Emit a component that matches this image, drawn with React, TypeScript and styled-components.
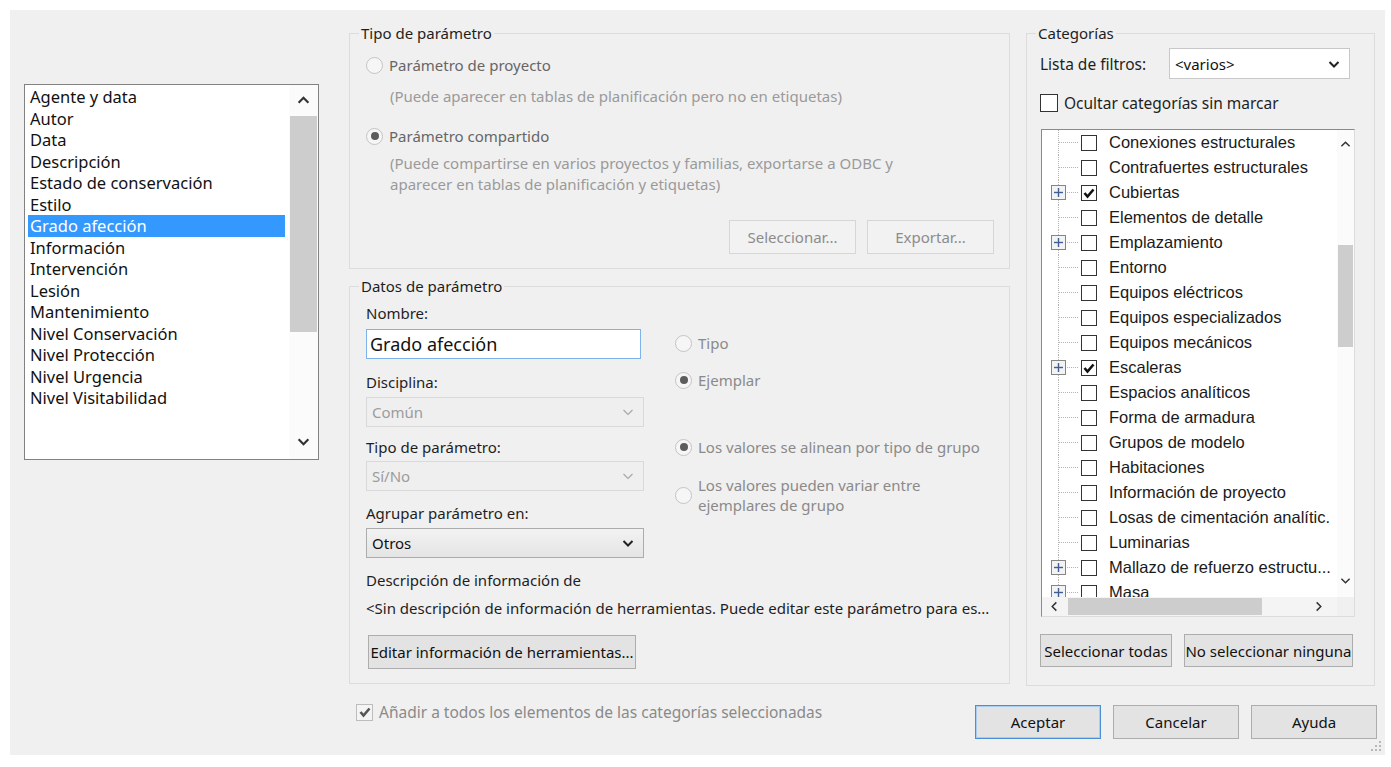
import styled, { createGlobalStyle } from "styled-components";

const GlobalStyle = createGlobalStyle`
  html, body {
    margin: 0;
    padding: 0;
    background: #ffffff;
  }
  body {
    font-family: "Noto Sans", "Open Sans", sans-serif;
  }
  * {
    box-sizing: border-box;
  }
`;

const uiFont = `"Noto Sans", "Open Sans", sans-serif`;
const treeFont = `"Liberation Sans", Arial, sans-serif`;

const params = [
  "Agente y data",
  "Autor",
  "Data",
  "Descripción",
  "Estado de conservación",
  "Estilo",
  "Grado afección",
  "Información",
  "Intervención",
  "Lesión",
  "Mantenimiento",
  "Nivel Conservación",
  "Nivel Protección",
  "Nivel Urgencia",
  "Nivel Visitabilidad",
];

type Cat = { name: string; plus?: boolean; checked?: boolean };

const categories: Cat[] = [
  { name: "Conexiones estructurales" },
  { name: "Contrafuertes estructurales" },
  { name: "Cubiertas", plus: true, checked: true },
  { name: "Elementos de detalle" },
  { name: "Emplazamiento", plus: true },
  { name: "Entorno" },
  { name: "Equipos eléctricos" },
  { name: "Equipos especializados" },
  { name: "Equipos mecánicos" },
  { name: "Escaleras", plus: true, checked: true },
  { name: "Espacios analíticos" },
  { name: "Forma de armadura" },
  { name: "Grupos de modelo" },
  { name: "Habitaciones" },
  { name: "Información de proyecto" },
  { name: "Losas de cimentación analític." },
  { name: "Luminarias" },
  { name: "Mallazo de refuerzo estructu...", plus: true },
  { name: "Masa", plus: true },
];

const Dialog = styled.div`
  position: relative;
  margin: 10px 0 0 10px;
  width: 1375px;
  height: 745px;
  background: #f0f0f0;
  padding: 13px 8px 0 14px;
  display: flex;
  flex-direction: column;
  color: #1e1e1e;
  font-family: ${uiFont};
`;

const Main = styled.div`
  display: flex;
  align-items: flex-start;
`;

/* ---------- left list ---------- */

const ListBox = styled.div`
  margin-top: 61px;
  width: 295px;
  height: 376px;
  border: 1px solid #828282;
  background: #ffffff;
  display: flex;
`;

const ListItems = styled.div`
  flex: 1;
  padding: 1px 4px 0 3px;
`;

const ListItem = styled.div<{ $selected?: boolean }>`
  font-size: 16.5px;
  line-height: 21.5px;
  padding-left: 2px;
  white-space: nowrap;
  color: ${({ $selected }) => ($selected ? "#ffffff" : "#111111")};
  background: ${({ $selected }) => ($selected ? "#3399ff" : "transparent")};
`;

const VScroll = styled.div<{ $w: number }>`
  width: ${({ $w }) => $w}px;
  display: flex;
  flex-direction: column;
  align-items: stretch;
  background: #fbfbfb;
`;

const ArrowCell = styled.div<{ $h: number }>`
  height: ${({ $h }) => $h}px;
  flex-shrink: 0;
  display: flex;
  align-items: center;
  justify-content: center;
`;

const Thumb = styled.div<{ $h: number; $top?: number }>`
  height: ${({ $h }) => $h}px;
  margin: ${({ $top }) => $top ?? 0}px 1px 0 1px;
  background: #cdcdcd;
  flex-shrink: 0;
`;

const Spacer = styled.div`
  flex: 1;
`;

/* ---------- groups ---------- */

const Column = styled.div<{ $w: number; $ml: number }>`
  width: ${({ $w }) => $w}px;
  margin-left: ${({ $ml }) => $ml}px;
  display: flex;
  flex-direction: column;
  gap: 7px;
`;

const Group = styled.fieldset`
  margin: 0;
  padding: 0;
  min-width: 0;
  width: 100%;
  border: 1px solid #dcdcdc;
`;

const Legend = styled.legend`
  margin-left: 9px;
  padding: 0 2px;
  font-size: 15px;
  line-height: 20px;
  color: #1e1e1e;
`;

const Body = styled.div<{ $pad: string }>`
  padding: ${({ $pad }) => $pad};
  display: flex;
  flex-direction: column;
`;

const RadioRow = styled.div<{ $mt?: number }>`
  display: flex;
  align-items: center;
  gap: 6px;
  min-height: 22px;
  margin-top: ${({ $mt }) => $mt ?? 0}px;
`;

const RadioCircle = styled.span<{ $checked?: boolean }>`
  width: 17px;
  height: 17px;
  flex-shrink: 0;
  border-radius: 50%;
  border: 1px solid #c4c4c4;
  background: #f6f6f6;
  display: flex;
  align-items: center;
  justify-content: center;
  &::after {
    content: "";
    display: ${({ $checked }) => ($checked ? "block" : "none")};
    width: 8px;
    height: 8px;
    border-radius: 50%;
    background: #5c5c5c;
  }
`;

const OptionText = styled.span<{ $tone?: "mid" | "light" }>`
  font-size: 15px;
  line-height: 20px;
  color: ${({ $tone }) => ($tone === "light" ? "#8a8a8a" : "#666666")};
`;

const Hint = styled.div<{ $mt: number }>`
  margin: ${({ $mt }) => $mt}px 0 0 24px;
  font-size: 15px;
  line-height: 21px;
  color: #9a9a9a;
`;

const ButtonRow = styled.div<{ $mt: number; $justify?: string; $gap: number; $ml?: number }>`
  display: flex;
  justify-content: ${({ $justify }) => $justify ?? "flex-start"};
  gap: ${({ $gap }) => $gap}px;
  margin-top: ${({ $mt }) => $mt}px;
  margin-left: ${({ $ml }) => $ml ?? 0}px;
`;

const Button = styled.button<{
  $w: number;
  $h?: number;
  $disabled?: boolean;
  $default?: boolean;
}>`
  width: ${({ $w }) => $w}px;
  height: ${({ $h }) => $h ?? 34}px;
  padding: 0;
  font-family: ${uiFont};
  font-size: 15px;
  color: ${({ $disabled }) => ($disabled ? "#8c8c8c" : "#111111")};
  background: ${({ $disabled }) => ($disabled ? "#f2f2f2" : "#e3e3e3")};
  border: 1px solid
    ${({ $disabled, $default }) =>
      $default ? "#4a90d9" : $disabled ? "#d6d6d6" : "#adadad"};
  box-shadow: ${({ $default }) =>
    $default ? "inset 0 0 0 1px #a9cdf0" : "none"};
  white-space: nowrap;
  overflow: hidden;
`;

const FieldsArea = styled.div`
  display: flex;
  align-items: flex-start;
`;

const FieldsCol = styled.div`
  width: 278px;
  display: flex;
  flex-direction: column;
`;

const RadiosCol = styled.div`
  margin-left: 31px;
  display: flex;
  flex-direction: column;
`;

const Label = styled.div<{ $mt?: number }>`
  margin-top: ${({ $mt }) => $mt ?? 0}px;
  font-size: 15px;
  line-height: 20px;
  color: #1e1e1e;
  white-space: nowrap;
`;

const NameInput = styled.div`
  margin-top: 6px;
  width: 275px;
  height: 30px;
  border: 1px solid #7eb4ea;
  background: #ffffff;
  padding-left: 3px;
  font-size: 18px;
  line-height: 28px;
  color: #111111;
`;

const Combo = styled.div<{
  $variant: "disabled" | "enabled" | "white";
  $mt?: number;
  $w: number;
  $h?: number;
}>`
  margin-top: ${({ $mt }) => $mt ?? 0}px;
  width: ${({ $w }) => $w}px;
  height: ${({ $h }) => $h ?? 30}px;
  display: flex;
  align-items: center;
  justify-content: space-between;
  padding: 0 9px 0 5px;
  font-size: 15px;
  color: ${({ $variant }) => ($variant === "disabled" ? "#9c9c9c" : "#111111")};
  border: 1px solid
    ${({ $variant }) =>
      $variant === "disabled" ? "#d9d9d9" : $variant === "white" ? "#c8c8c8" : "#acacac"};
  background: ${({ $variant }) =>
    $variant === "disabled"
      ? "#efefef"
      : $variant === "white"
      ? "#ffffff"
      : "linear-gradient(#f2f2f2, #e4e4e4)"};
`;

const DescLine = styled.div`
  margin-top: 8px;
  font-size: 15px;
  line-height: 20px;
  color: #1e1e1e;
  white-space: nowrap;
  overflow: hidden;
`;

/* ---------- categories ---------- */

const FilterRow = styled.div`
  display: flex;
  align-items: center;
`;

const FilterLabel = styled.span`
  width: 129px;
  font-size: 15.5px;
  color: #1e1e1e;
`;

const CheckRow = styled.div<{ $mt?: number; $ml?: number }>`
  display: flex;
  align-items: center;
  gap: 6px;
  margin-top: ${({ $mt }) => $mt ?? 0}px;
  margin-left: ${({ $ml }) => $ml ?? 0}px;
`;

const Box = styled.span<{ $size: number; $muted?: boolean; $ml?: number }>`
  width: ${({ $size }) => $size}px;
  height: ${({ $size }) => $size}px;
  margin-left: ${({ $ml }) => $ml ?? 0}px;
  flex-shrink: 0;
  border: 1px solid ${({ $muted }) => ($muted ? "#bdbdbd" : "#333333")};
  background: ${({ $muted }) => ($muted ? "#f4f4f4" : "#ffffff")};
  display: flex;
  align-items: center;
  justify-content: center;
`;

const CheckText = styled.span<{ $muted?: boolean }>`
  font-size: 15.5px;
  line-height: 20px;
  color: ${({ $muted }) => ($muted ? "#8a8a8a" : "#1e1e1e")};
  white-space: nowrap;
`;

const TreeBox = styled.div`
  margin: 16px 0 0 1px;
  width: 314px;
  height: 488px;
  border-top: 1px solid #8a8a8a;
  border-left: 1px solid #8a8a8a;
  border-right: 1px solid #dcdcdc;
  border-bottom: 1px solid #dcdcdc;
  background: #ffffff;
  display: flex;
  flex-direction: column;
`;

const TreeMain = styled.div`
  height: 467px;
  display: flex;
`;

const TreeViewport = styled.div`
  flex: 1;
  overflow: hidden;
`;

const TreeRow = styled.div`
  height: 25px;
  display: flex;
  align-items: center;
  white-space: nowrap;
`;

const TreeText = styled.span`
  margin-left: 12px;
  font-family: ${treeFont};
  font-size: 16.5px;
  color: #1a1a1a;
`;

const HScroll = styled.div`
  height: 19px;
  display: flex;
  background: #f4f4f4;
`;

const HArrow = styled.div<{ $w: number }>`
  width: ${({ $w }) => $w}px;
  flex-shrink: 0;
  display: flex;
  align-items: center;
  justify-content: center;
`;

const HThumb = styled.div`
  width: 194px;
  margin: 1px 0 1px 2px;
  background: #cdcdcd;
`;

const Corner = styled.div`
  width: 17px;
  background: #f0f0f0;
`;

/* ---------- footer ---------- */

const Footer = styled.div`
  display: flex;
  align-items: flex-start;
  margin-top: 19px;
`;

const FooterButtons = styled.div`
  margin-left: auto;
  display: flex;
  gap: 12px;
`;

const Grip = styled.svg`
  position: absolute;
  right: 3px;
  bottom: 3px;
`;

/* ---------- drawings ---------- */

const Chevron = ({
  dir,
  color = "#333333",
  size = 12,
  weight = 1.6,
}: {
  dir: "up" | "down" | "left" | "right";
  color?: string;
  size?: number;
  weight?: number;
}) => {
  const pts = {
    up: "1.5,8 6,3.5 10.5,8",
    down: "1.5,4 6,8.5 10.5,4",
    left: "8,1.5 3.5,6 8,10.5",
    right: "4,1.5 8.5,6 4,10.5",
  }[dir];
  return (
    <svg width={size} height={size} viewBox="0 0 12 12">
      <polyline points={pts} fill="none" stroke={color} strokeWidth={weight} />
    </svg>
  );
};

const Tick = ({ color = "#111111" }: { color?: string }) => (
  <svg width="12" height="12" viewBox="0 0 12 12">
    <polyline points="1.5,6 4.5,9.5 10.5,2.5" fill="none" stroke={color} strokeWidth="2.6" />
  </svg>
);

const Guide = ({ plus }: { plus?: boolean }) => (
  <svg width="36" height="25" viewBox="0 0 36 25">
    <line x1="16.5" y1="0" x2="16.5" y2="25" stroke="#b4b4b4" strokeDasharray="1 1" />
    <line x1="17" y1="12.5" x2="36" y2="12.5" stroke="#b4b4b4" strokeDasharray="1 1" />
    {plus && (
      <g>
        <rect x="9.5" y="5.5" width="14" height="14" fill="#f3f3f3" stroke="#858585" />
        <line x1="12" y1="12.5" x2="21" y2="12.5" stroke="#3f5e96" strokeWidth="1.4" />
        <line x1="16.5" y1="8" x2="16.5" y2="17" stroke="#3f5e96" strokeWidth="1.4" />
      </g>
    )}
  </svg>
);

const Radio = ({
  checked,
  children,
  tone,
  mt,
}: {
  checked?: boolean;
  children: React.ReactNode;
  tone?: "mid" | "light";
  mt?: number;
}) => (
  <RadioRow $mt={mt}>
    <RadioCircle $checked={checked} />
    <OptionText $tone={tone}>{children}</OptionText>
  </RadioRow>
);

export default function App() {
  return (
    <>
      <GlobalStyle />
      <Dialog>
        <Main>
          <ListBox>
            <ListItems>
              {params.map((p) => (
                <ListItem key={p} $selected={p === "Grado afección"}>
                  {p}
                </ListItem>
              ))}
            </ListItems>
            <VScroll $w={29}>
              <ArrowCell $h={31}>
                <Chevron dir="up" size={13} weight={2} />
              </ArrowCell>
              <Thumb $h={216} />
              <Spacer />
              <ArrowCell $h={36}>
                <Chevron dir="down" size={13} weight={2} />
              </ArrowCell>
            </VScroll>
          </ListBox>

          <Column $w={661} $ml={30}>
            <Group>
              <Legend>Tipo de parámetro</Legend>
              <Body $pad="11px 15px 14px 16px">
                <Radio>Parámetro de proyecto</Radio>
                <Hint $mt={10}>
                  (Puede aparecer en tablas de planificación pero no en etiquetas)
                </Hint>
                <Radio checked mt={18}>
                  Parámetro compartido
                </Radio>
                <Hint $mt={6}>
                  (Puede compartirse en varios proyectos y familias, exportarse a ODBC y
                  <br />
                  aparecer en tablas de planificación y etiquetas)
                </Hint>
                <ButtonRow $mt={25} $justify="flex-end" $gap={11}>
                  <Button $w={127} $disabled>
                    Seleccionar...
                  </Button>
                  <Button $w={127} $disabled>
                    Exportar...
                  </Button>
                </ButtonRow>
              </Body>
            </Group>

            <Group>
              <Legend>Datos de parámetro</Legend>
              <Body $pad="7px 10px 14px 16px">
                <FieldsArea>
                  <FieldsCol>
                    <Label>Nombre:</Label>
                    <NameInput>Grado afección</NameInput>
                    <Label $mt={13}>Disciplina:</Label>
                    <Combo $variant="disabled" $w={278} $mt={5}>
                      Común
                      <Chevron dir="down" color="#a8a8a8" weight={1.2} />
                    </Combo>
                    <Label $mt={10}>Tipo de parámetro:</Label>
                    <Combo $variant="disabled" $w={278} $mt={4}>
                      Sí/No
                      <Chevron dir="down" color="#a8a8a8" weight={1.2} />
                    </Combo>
                    <Label $mt={12}>Agrupar parámetro en:</Label>
                    <Combo $variant="enabled" $w={278} $mt={5}>
                      Otros
                      <Chevron dir="down" color="#222222" weight={2} />
                    </Combo>
                    <Label $mt={12}>Descripción de información de</Label>
                  </FieldsCol>
                  <RadiosCol>
                    <Radio mt={29} tone="light">
                      Tipo
                    </Radio>
                    <Radio checked mt={15} tone="light">
                      Ejemplar
                    </Radio>
                    <Radio checked mt={45} tone="light">
                      Los valores se alinean por tipo de grupo
                    </Radio>
                    <Radio mt={17} tone="light">
                      Los valores pueden variar entre
                      <br />
                      ejemplares de grupo
                    </Radio>
                  </RadiosCol>
                </FieldsArea>
                <DescLine>
                  &lt;Sin descripción de información de herramientas. Puede editar este parámetro para es...
                </DescLine>
                <ButtonRow $mt={17} $gap={0} $ml={2}>
                  <Button $w={268}>Editar información de herramientas...</Button>
                </ButtonRow>
              </Body>
            </Group>
          </Column>

          <Column $w={349} $ml={16}>
            <Group>
              <Legend>Categorías</Legend>
              <Body $pad="5px 20px 18px 13px">
                <FilterRow>
                  <FilterLabel>Lista de filtros:</FilterLabel>
                  <Combo $variant="white" $w={181} $h={31}>
                    &lt;varios&gt;
                    <Chevron dir="down" color="#222222" weight={2} />
                  </Combo>
                </FilterRow>
                <CheckRow $mt={14}>
                  <Box $size={18} />
                  <CheckText>Ocultar categorías sin marcar</CheckText>
                </CheckRow>
                <TreeBox>
                  <TreeMain>
                    <TreeViewport>
                      {categories.map((c) => (
                        <TreeRow key={c.name}>
                          <Guide plus={c.plus} />
                          <Box $size={16} $ml={3}>
                            {c.checked && <Tick />}
                          </Box>
                          <TreeText>{c.name}</TreeText>
                        </TreeRow>
                      ))}
                    </TreeViewport>
                    <VScroll $w={17}>
                      <ArrowCell $h={29}>
                        <Chevron dir="up" size={11} weight={1.6} />
                      </ArrowCell>
                      <Thumb $h={102} $top={86} />
                      <Spacer />
                      <ArrowCell $h={34}>
                        <Chevron dir="down" size={11} weight={1.6} />
                      </ArrowCell>
                    </VScroll>
                  </TreeMain>
                  <HScroll>
                    <HArrow $w={24}>
                      <Chevron dir="left" size={11} weight={1.6} />
                    </HArrow>
                    <HThumb />
                    <Spacer />
                    <HArrow $w={38}>
                      <Chevron dir="right" size={11} weight={1.6} />
                    </HArrow>
                    <Corner />
                  </HScroll>
                </TreeBox>
                <ButtonRow $mt={17} $gap={12}>
                  <Button $w={132} $h={33}>
                    Seleccionar todas
                  </Button>
                  <Button $w={169} $h={33}>
                    No seleccionar ninguna
                  </Button>
                </ButtonRow>
              </Body>
            </Group>
          </Column>
        </Main>

        <Footer>
          <CheckRow $mt={-3} $ml={332}>
            <Box $size={17} $muted>
              <Tick color="#555555" />
            </Box>
            <CheckText $muted>Añadir a todos los elementos de las categorías seleccionadas</CheckText>
          </CheckRow>
          <FooterButtons>
            <Button $w={126} $default>
              Aceptar
            </Button>
            <Button $w={126}>Cancelar</Button>
            <Button $w={126}>Ayuda</Button>
          </FooterButtons>
        </Footer>

        <Grip width="12" height="12" viewBox="0 0 12 12">
          {[
            [9, 1],
            [9, 5],
            [5, 5],
            [9, 9],
            [5, 9],
            [1, 9],
          ].map(([x, y]) => (
            <rect key={`${x}-${y}`} x={x} y={y} width="2" height="2" fill="#b8b8b8" />
          ))}
        </Grip>
      </Dialog>
    </>
  );
}
